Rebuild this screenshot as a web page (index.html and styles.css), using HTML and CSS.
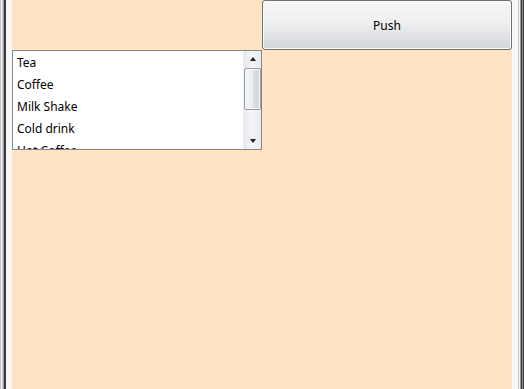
FILE: index.html
```html
<!DOCTYPE html>
<html lang="en">
<head>
    <meta charset="UTF-8">
    <meta name="viewport" content="width=device-width, initial-scale=1.0">
    <title>Drinks</title>
    <link rel="stylesheet" href="styles.css">
</head>
<body>
    <div class="window">
        <div class="edge edge-left"></div>
        <div class="content">
            <button class="push">Push</button>
            <!-- Drinks list -->
            <div class="listbox">
                <ul class="items">
                    <li>Tea</li>
                    <li>Coffee</li>
                    <li>Milk Shake</li>
                    <li>Cold drink</li>
                    <li>Hot Coffee</li>
                </ul>
                <div class="scrollbar">
                    <div class="arrow arrow-up"></div>
                    <div class="track">
                        <div class="thumb"></div>
                    </div>
                    <div class="arrow arrow-down"></div>
                </div>
            </div>
        </div>
        <div class="edge edge-right"></div>
    </div>
</body>
</html>
```

FILE: styles.css
```css
html, body {
    margin: 0;
    padding: 0;
    height: 100%;
}

body {
    font-family: "Noto Sans", "Open Sans", sans-serif;
    font-size: 12px;
    color: #000;
}

.window {
    display: flex;
    height: 389px;
    width: 524px;
}

.edge {
    width: 12px;
    flex-shrink: 0;
}

.edge-left {
    background: linear-gradient(to right,
        #c4c4c4 0, #c4c4c4 1px,
        #f4f4f4 1px, #f4f4f4 2px,
        #cfcfcf 2px, #cfcfcf 3px,
        #9a9a9a 3px, #9a9a9a 4px,
        #3c3c3c 4px, #3c3c3c 6px,
        #f7f7f7 6px, #f7f7f7 12px);
}

.edge-right {
    background: linear-gradient(to right,
        #f7f7f7 0, #f7f7f7 6px,
        #c8c8c8 6px, #c8c8c8 7px,
        #f2f2f2 7px, #f2f2f2 8px,
        #9a9a9a 8px, #9a9a9a 9px,
        #3c3c3c 9px, #3c3c3c 10px,
        #8a8a8a 10px, #8a8a8a 11px,
        #3c3c3c 11px, #3c3c3c 12px);
}

.content {
    flex: 1;
    background-color: #ffe4c4;
    display: grid;
    grid-template-columns: 250px 250px;
    grid-template-rows: 50px 100px;
    align-content: start;
}

.push {
    grid-column: 2;
    grid-row: 1;
    width: 250px;
    height: 50px;
    margin: 0;
    padding: 0;
    border: 1px solid #707070;
    border-radius: 3px;
    background: linear-gradient(to bottom, #f7f7f7 0%, #eeeff0 45%, #dcdee1 80%, #d2d5d9 100%);
    box-shadow: inset 0 0 0 1px #fcfcfc;
    font-family: "Noto Sans", "Open Sans", sans-serif;
    font-size: 12px;
    color: #000;
}

.listbox {
    grid-column: 1;
    grid-row: 2;
    display: flex;
    width: 250px;
    height: 100px;
    box-sizing: border-box;
    border: 1px solid #828790;
    background-color: #fff;
}

.items {
    flex: 1;
    list-style: none;
    margin: 0;
    padding: 1px 0 0 0;
    overflow: hidden;
}

.items li {
    height: 22px;
    line-height: 22px;
    padding-left: 4px;
}

.scrollbar {
    width: 17px;
    display: flex;
    flex-direction: column;
    background: linear-gradient(to right, #e4e6ea 0, #f5f6f8 40%, #e9ebee 100%);
    border-left: 1px solid #eef0f2;
}

.arrow {
    height: 16px;
    display: flex;
    align-items: center;
    justify-content: center;
}

.arrow::before {
    content: "";
    width: 0;
    height: 0;
    border-left: 3.5px solid transparent;
    border-right: 3.5px solid transparent;
}

.arrow-up::before {
    border-bottom: 4px solid #1e1e1e;
}

.arrow-down::before {
    border-top: 4px solid #1e1e1e;
}

.track {
    flex: 1;
    padding-top: 1px;
}

.thumb {
    height: 42px;
    box-sizing: border-box;
    border: 1px solid #989ca3;
    border-radius: 2px;
    background: linear-gradient(to right, #f4f5f6 0, #eceef0 50%, #dde1e6 51%, #d2d6dc 100%);
    box-shadow: inset 0 0 0 1px #fafafa;
}
```
